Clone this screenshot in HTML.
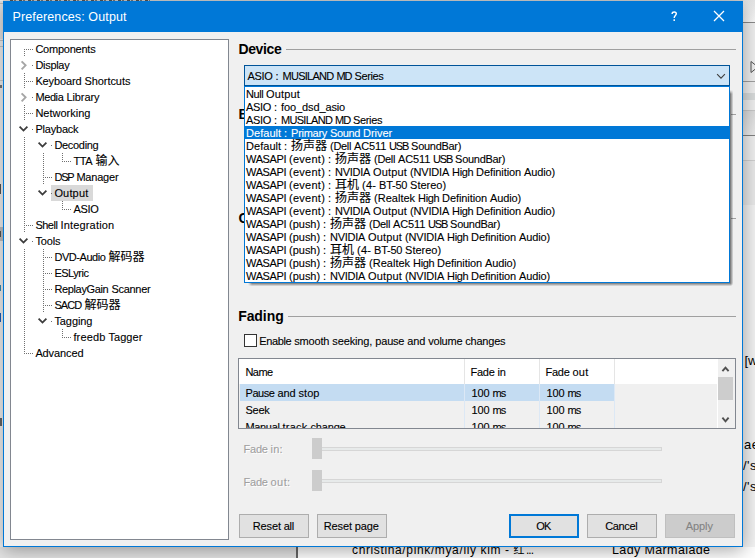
<!DOCTYPE html><html><head><meta charset="utf-8"><title>Preferences: Output</title><style>
html,body{margin:0;padding:0;}
body{width:755px;height:558px;overflow:hidden;position:relative;background:#f0f0f0;font-family:"Liberation Sans",sans-serif;font-size:11px;color:#000;}
*{box-sizing:border-box;}
.abs{position:absolute;}
.t{position:absolute;white-space:nowrap;line-height:14px;height:14px;font-size:11px;-webkit-text-stroke:0.1px;}
.t span{position:absolute;top:0;white-space:pre;}
.t svg{position:absolute;}
.t span.cjk{font-family:"Liberation Sans","Noto Sans CJK SC",sans-serif;font-size:12px;letter-spacing:0;}
.f{position:absolute;white-space:pre;}
#dlg{position:absolute;left:3px;top:1px;width:740px;height:546px;background:#f0f0f0;border:1px solid #0078d7;box-shadow:0 3px 18px rgba(0,0,0,0.36);}
#title{position:absolute;left:3px;top:1px;width:740px;height:31px;background:#0078d7;}
.hl{position:absolute;height:1px;background:#a0a0a0;}
.btn{position:absolute;height:24px;width:70px;border:1px solid #adadad;background:#e1e1e1;}
.dot-h{position:absolute;height:1px;background-image:linear-gradient(to right,#707070 50%,transparent 50%);background-size:2px 1px;}
.dot-v{position:absolute;width:1px;background-image:linear-gradient(to bottom,#707070 50%,transparent 50%);background-size:1px 2px;}
</style></head><body><div class="abs" style="left:0;top:0;width:755px;height:558px;background:#f0f0f0"></div>
<div class="abs" style="left:0;top:0;width:755px;height:1px;background:#d4d4d4"></div>
<div class="abs" style="left:10px;top:0;width:140px;height:1px;background-image:linear-gradient(to right,#555 30%,#ccc 30%,#ccc 45%,#777 45%,#777 65%,#d0d0d0 65%);background-size:9px 1px"></div>
<div class="abs" style="left:0;top:0;width:3px;height:558px;background:#f3f3f3"></div>
<div class="abs" style="left:0;top:1px;width:3px;height:38px;background:#e4e4e4"></div>
<div class="abs" style="left:0;top:3px;width:3px;height:1px;background:#bdbdbd"></div>
<div class="abs" style="left:0;top:40px;width:3px;height:1px;background:#c8c8c8"></div>
<div class="abs" style="left:0;top:46px;width:3px;height:1px;background:#c8c8c8"></div>
<div class="abs" style="left:0;top:80px;width:3px;height:1px;background:#d0d0d0"></div>
<div class="abs" style="left:0;top:85px;width:2px;height:3px;background:#777"></div>
<div class="abs" style="left:0;top:184px;width:1px;height:10px;background:#555"></div>
<div class="abs" style="left:0;top:227px;width:3px;height:14px;background:#c4c4c4"></div>
<div class="abs" style="left:0;top:231px;width:1px;height:6px;background:#555"></div>
<div class="abs" style="left:0;top:285px;width:1px;height:6px;background:#3a8fb7"></div>
<div class="abs" style="left:0;top:313px;width:1px;height:9px;background:#1e5fbf"></div>
<div class="abs" style="left:0;top:418px;width:2px;height:8px;background:#666"></div>
<div class="abs" style="left:743px;top:0;width:12px;height:558px;background:#f3f3f3"></div>
<div class="abs" style="left:743px;top:0;width:12px;height:22px;background:linear-gradient(to bottom,#e4e4e4,#fafafa)"></div>
<div class="abs" style="left:743px;top:22px;width:12px;height:1px;background:#8a8a8a"></div>
<div class="abs" style="left:743px;top:23px;width:12px;height:137px;background:#f0f0f0"></div>
<svg class="abs" style="left:750px;top:60px" width="5" height="14" viewBox="0 0 5 14"><path d="M1 1.5L8 7L1 12.5Z" stroke="#555" stroke-width="1" fill="none"/></svg>
<div class="abs" style="left:743px;top:81px;width:12px;height:1px;background:#a0a0a0"></div>
<div class="abs" style="left:743px;top:93px;width:12px;height:7px;background:#d9dcdc"></div>
<div class="abs" style="left:743px;top:110px;width:12px;height:1px;background:#c8c8c8"></div>
<div class="abs" style="left:743px;top:111px;width:12px;height:24px;background:linear-gradient(to bottom,#dcdcdc,#ececec)"></div>
<div class="abs" style="left:743px;top:135px;width:12px;height:1px;background:#808080"></div>
<div class="abs" style="left:743px;top:160px;width:12px;height:1px;background:#d0d0d0"></div>
<div class="abs" style="left:743px;top:161px;width:12px;height:44px;background:#e9e9e9"></div>
<div class="f" style="left:744.5px;top:352.00px;font-size:13px;line-height:17px;height:17px;letter-spacing:0.000px;color:#000;">[w</div>
<div class="f" style="left:744px;top:436.00px;font-size:13px;line-height:17px;height:17px;letter-spacing:0.000px;color:#000;letter-spacing:0.5px">ae</div>
<div class="f" style="left:743px;top:457.00px;font-size:13px;line-height:17px;height:17px;letter-spacing:0.000px;color:#000;letter-spacing:0.5px">/'s</div>
<div class="f" style="left:743px;top:478.00px;font-size:13px;line-height:17px;height:17px;letter-spacing:0.000px;color:#000;letter-spacing:0.5px">/'s</div>
<div class="abs" style="left:0;top:547px;width:755px;height:11px;background:#fff"></div>
<div class="abs" style="left:0;top:547px;width:296px;height:11px;background:#e4e4e4"></div>
<div class="abs" style="left:296px;top:547px;width:2px;height:11px;background:#666"></div>
<div class="f" style="left:352px;top:542.44px;font-size:12px;line-height:16px;height:16px;letter-spacing:0.632px;color:#000;">christina/pink/mya/liy kim</div>
<div class="f" style="left:505px;top:542.44px;font-size:12px;line-height:16px;height:16px;letter-spacing:0.000px;color:#000;">-</div>
<div class="f" style="left:513.5px;top:542.44px;font-size:11px;line-height:16px;height:16px;letter-spacing:0;color:#000;font-family:'Liberation Sans','Noto Sans CJK SC',sans-serif;">红</div>
<div class="f" style="left:526px;top:542.44px;font-size:12px;line-height:16px;height:16px;letter-spacing:-1.008px;color:#000;">...</div>
<div class="f" style="left:612px;top:542.27px;font-size:12.5px;line-height:16px;height:16px;letter-spacing:0.376px;color:#000;">Lady Marmalade</div>
<div id="dlg"></div>
<div id="title"></div>
<div class="f" style="left:12.5px;top:8.67px;font-size:12.5px;line-height:16px;height:16px;letter-spacing:0.118px;color:#fff;">Preferences: Output</div>
<svg class="abs" style="left:671px;top:11px" width="7" height="11" viewBox="0 0 7 11"><path d="M1.1 2.9C1.1 1.5 2 0.9 3.2 0.9C4.5 0.9 5.3 1.6 5.3 2.8C5.3 4.5 3.2 4.7 3.2 6.9M3.2 8.3V10" stroke="#fff" stroke-width="1.45" fill="none"/></svg>
<svg class="abs" style="left:713px;top:10px" width="12" height="12" viewBox="0 0 12 12"><path d="M1 1L11 11M11 1L1 11" stroke="#fff" stroke-width="1.25" fill="none"/></svg>
<div class="abs" style="left:10px;top:39px;width:219px;height:501px;background:#fff;border:1px solid #828790"></div>
<div class="t" style="left:35.4px;top:42.19px;color:#000;"><span style="left:0px;letter-spacing:-0.237px">Components</span></div>
<div class="dot-h" style="left:24px;top:49px;width:10px"></div>
<div class="t" style="left:35.4px;top:58.19px;color:#000;"><span style="left:0px;letter-spacing:-0.297px">Display</span></div>
<div class="dot-h" style="left:32px;top:65px;width:2px"></div>
<svg class="abs" style="left:20px;top:60px" width="8" height="10" viewBox="0 0 8 10"><path d="M1.6 1.3L5.6 5.3L1.6 9.3" stroke="#a6a6a6" stroke-width="1.9" fill="none"/></svg>
<div class="t" style="left:35.4px;top:74.19px;color:#000;"><span style="left:0px;letter-spacing:-0.137px">Keyboard</span><span style="left:49px;letter-spacing:-0.052px">Shortcuts</span></div>
<div class="dot-h" style="left:24px;top:81px;width:10px"></div>
<div class="t" style="left:35.4px;top:90.19px;color:#000;"><span style="left:0px;letter-spacing:-0.394px">Media</span><span style="left:31px;letter-spacing:-0.089px">Library</span></div>
<div class="dot-h" style="left:32px;top:97px;width:2px"></div>
<svg class="abs" style="left:20px;top:92px" width="8" height="10" viewBox="0 0 8 10"><path d="M1.6 1.3L5.6 5.3L1.6 9.3" stroke="#a6a6a6" stroke-width="1.9" fill="none"/></svg>
<div class="t" style="left:35.4px;top:106.19px;color:#000;"><span style="left:0px;letter-spacing:-0.003px">Networking</span></div>
<div class="dot-h" style="left:24px;top:113px;width:10px"></div>
<div class="t" style="left:35.4px;top:122.19px;color:#000;"><span style="left:0px;letter-spacing:-0.205px">Playback</span></div>
<div class="dot-h" style="left:32px;top:129px;width:2px"></div>
<svg class="abs" style="left:18px;top:125px" width="12" height="8" viewBox="0 0 12 8"><path d="M1.6 1.7L5.5 5.6L9.4 1.7" stroke="#3c3c3c" stroke-width="1.8" fill="none"/></svg>
<div class="t" style="left:54.4px;top:138.19px;color:#000;"><span style="left:0px;letter-spacing:-0.311px">Decoding</span></div>
<div class="dot-h" style="left:51px;top:145px;width:2px"></div>
<svg class="abs" style="left:37px;top:141px" width="12" height="8" viewBox="0 0 12 8"><path d="M1.6 1.7L5.5 5.6L9.4 1.7" stroke="#3c3c3c" stroke-width="1.8" fill="none"/></svg>
<div class="t" style="left:73.4px;top:154.19px;color:#000;"><span style="left:0px;letter-spacing:-0.323px">TTA</span><span class="cjk" style="left:22px">输入</span></div>
<div class="dot-h" style="left:62px;top:161px;width:10px"></div>
<div class="t" style="left:54.4px;top:170.19px;color:#000;"><span style="left:0px;letter-spacing:-1.208px">DSP</span><span style="left:22px;letter-spacing:-0.203px">Manager</span></div>
<div class="dot-h" style="left:43px;top:177px;width:10px"></div>
<div class="abs" style="left:51.0px;top:185px;width:42px;height:16px;background:#d9d9d9"></div>
<div class="t" style="left:54.4px;top:186.19px;color:#000;"><span style="left:0px;letter-spacing:0.161px">Output</span></div>
<div class="dot-h" style="left:51px;top:193px;width:2px"></div>
<svg class="abs" style="left:37px;top:189px" width="12" height="8" viewBox="0 0 12 8"><path d="M1.6 1.7L5.5 5.6L9.4 1.7" stroke="#3c3c3c" stroke-width="1.8" fill="none"/></svg>
<div class="t" style="left:73.4px;top:202.19px;color:#000;"><span style="left:0px;letter-spacing:-0.324px">ASIO</span></div>
<div class="dot-h" style="left:62px;top:209px;width:10px"></div>
<div class="t" style="left:35.4px;top:218.19px;color:#000;"><span style="left:0px;letter-spacing:-0.494px">Shell</span><span style="left:25px;letter-spacing:0.183px">Integration</span></div>
<div class="dot-h" style="left:24px;top:225px;width:10px"></div>
<div class="t" style="left:35.4px;top:234.19px;color:#000;"><span style="left:0px;letter-spacing:-0.138px">Tools</span></div>
<div class="dot-h" style="left:32px;top:241px;width:2px"></div>
<svg class="abs" style="left:18px;top:237px" width="12" height="8" viewBox="0 0 12 8"><path d="M1.6 1.7L5.5 5.6L9.4 1.7" stroke="#3c3c3c" stroke-width="1.8" fill="none"/></svg>
<div class="t" style="left:54.4px;top:250.19px;color:#000;"><span style="left:0px;letter-spacing:-0.448px">DVD-Audio</span><span class="cjk" style="left:54px">解码器</span></div>
<div class="dot-h" style="left:43px;top:257px;width:10px"></div>
<div class="t" style="left:54.4px;top:266.19px;color:#000;"><span style="left:0px;letter-spacing:-0.500px">ESLyric</span></div>
<div class="dot-h" style="left:43px;top:273px;width:10px"></div>
<div class="t" style="left:54.4px;top:282.19px;color:#000;"><span style="left:0px;letter-spacing:-0.348px">ReplayGain</span><span style="left:57px;letter-spacing:-0.283px">Scanner</span></div>
<div class="dot-h" style="left:43px;top:289px;width:10px"></div>
<div class="t" style="left:54.4px;top:298.19px;color:#000;"><span style="left:0px;letter-spacing:-0.891px">SACD</span><span class="cjk" style="left:30px">解码器</span></div>
<div class="dot-h" style="left:43px;top:305px;width:10px"></div>
<div class="t" style="left:54.4px;top:314.19px;color:#000;"><span style="left:0px;letter-spacing:-0.078px">Tagging</span></div>
<div class="dot-h" style="left:51px;top:321px;width:2px"></div>
<svg class="abs" style="left:37px;top:317px" width="12" height="8" viewBox="0 0 12 8"><path d="M1.6 1.7L5.5 5.6L9.4 1.7" stroke="#3c3c3c" stroke-width="1.8" fill="none"/></svg>
<div class="t" style="left:73.4px;top:330.19px;color:#000;"><span style="left:0px;letter-spacing:0.133px">freedb</span><span style="left:35px;letter-spacing:0.060px">Tagger</span></div>
<div class="dot-h" style="left:62px;top:337px;width:10px"></div>
<div class="t" style="left:35.4px;top:346.19px;color:#000;"><span style="left:0px;letter-spacing:-0.117px">Advanced</span></div>
<div class="dot-h" style="left:24px;top:353px;width:10px"></div>
<div class="dot-v" style="left:24px;top:49px;height:7px"></div>
<div class="dot-v" style="left:24px;top:73px;height:16px"></div>
<div class="dot-v" style="left:24px;top:105px;height:16px"></div>
<div class="dot-v" style="left:24px;top:137px;height:96px"></div>
<div class="dot-v" style="left:24px;top:249px;height:105px"></div>
<div class="dot-v" style="left:43px;top:137px;height:0px"></div>
<div class="dot-v" style="left:43px;top:153px;height:32px"></div>
<div class="dot-v" style="left:62px;top:153px;height:9px"></div>
<div class="dot-v" style="left:62px;top:201px;height:9px"></div>
<div class="dot-v" style="left:43px;top:249px;height:64px"></div>
<div class="dot-v" style="left:62px;top:329px;height:9px"></div>
<div class="f" style="left:238.5px;top:40.45px;font-size:14px;font-weight:bold;line-height:18px;height:18px;letter-spacing:-0.391px;color:#000;">Device</div>
<div class="hl" style="left:286px;top:49px;width:450px"></div>
<div class="f" style="left:238.5px;top:105.45px;font-size:14px;font-weight:bold;line-height:18px;height:18px;letter-spacing:0.000px;color:#000;">B</div>
<div class="f" style="left:238.5px;top:209.45px;font-size:14px;font-weight:bold;line-height:18px;height:18px;letter-spacing:0.000px;color:#000;">O</div>
<div class="hl" style="left:731px;top:114px;width:5px"></div>
<div class="hl" style="left:731px;top:218px;width:5px"></div>
<div class="abs" style="left:244px;top:65px;width:486px;height:21px;background:#cce4f7;border:1px solid #005499"></div>
<div class="t" style="left:247.5px;top:69.19px;color:#000;"><span style="left:0px;letter-spacing:-0.324px">ASIO</span><span style="left:28px;letter-spacing:0.938px">:</span><span style="left:35px;letter-spacing:-0.730px">MUSILAND</span><span style="left:89px;letter-spacing:-1.055px">MD</span><span style="left:107px;letter-spacing:-0.365px">Series</span></div>
<svg class="abs" style="left:716px;top:72.5px" width="10" height="7" viewBox="0 0 10 7"><path d="M1.1 1.2L5 5.1L8.9 1.2" stroke="#404040" stroke-width="1.15" fill="none"/></svg>
<div class="abs" style="left:730px;top:90px;width:3px;height:193px;background:linear-gradient(to bottom,rgba(240,240,240,1),rgba(240,240,240,0) 4px),linear-gradient(to right,rgba(0,0,0,0.55),rgba(0,0,0,0.08))"></div>
<div class="abs" style="left:248px;top:283px;width:482px;height:3px;background:linear-gradient(to right,rgba(240,240,240,1),rgba(240,240,240,0) 4px),linear-gradient(to bottom,rgba(0,0,0,0.5),rgba(0,0,0,0.06))"></div>
<div class="abs" style="left:730px;top:283px;width:3px;height:3px;background:radial-gradient(circle at 0 0,rgba(0,0,0,0.55),rgba(0,0,0,0.05) 3px,rgba(0,0,0,0) 3.5px)"></div>
<div class="abs" style="left:244px;top:86px;width:486px;height:197px;background:#fff;border:1px solid #0078d7"></div>
<div class="t" style="left:246.1px;top:87.19px;color:#000;"><span style="left:0px;letter-spacing:-0.488px">Null</span><span style="left:20px;letter-spacing:0.161px">Output</span></div>
<div class="t" style="left:246.1px;top:100.19px;color:#000;"><span style="left:0px;letter-spacing:-0.324px">ASIO</span><span style="left:28px;letter-spacing:0.938px">:</span><span style="left:35px;letter-spacing:-0.121px">foo_dsd_asio</span></div>
<div class="t" style="left:246.1px;top:113.19px;color:#000;"><span style="left:0px;letter-spacing:-0.324px">ASIO</span><span style="left:28px;letter-spacing:0.938px">:</span><span style="left:35px;letter-spacing:-0.730px">MUSILAND</span><span style="left:89px;letter-spacing:-1.055px">MD</span><span style="left:107px;letter-spacing:-0.365px">Series</span></div>
<div class="abs" style="left:245px;top:126px;width:484px;height:13px;background:#0078d7"></div>
<div class="t" style="left:246.1px;top:126.19px;color:#fff;"><span style="left:0px;letter-spacing:0.020px">Default</span><span style="left:38px;letter-spacing:0.938px">:</span><span style="left:45px;letter-spacing:-0.270px">Primary</span><span style="left:84px;letter-spacing:-0.362px">Sound</span><span style="left:117px;letter-spacing:-0.057px">Driver</span></div>
<div class="t" style="left:246.1px;top:139.19px;color:#000;"><span style="left:0px;letter-spacing:0.020px">Default</span><span style="left:38px;letter-spacing:0.938px">:</span><span class="cjk" style="left:45px">扬声器</span><span style="left:84px;letter-spacing:-0.325px">(Dell</span><span style="left:108px;letter-spacing:-0.166px">AC511</span><span style="left:143px;letter-spacing:-1.208px">USB</span><span style="left:165px;letter-spacing:-0.288px">SoundBar)</span></div>
<div class="t" style="left:246.1px;top:152.19px;color:#000;"><span style="left:0px;letter-spacing:-0.398px">WASAPI</span><span style="left:43px;letter-spacing:0.250px">(event)</span><span style="left:82px;letter-spacing:0.938px">:</span><span class="cjk" style="left:89px">扬声器</span><span style="left:128px;letter-spacing:-0.325px">(Dell</span><span style="left:152px;letter-spacing:-0.166px">AC511</span><span style="left:187px;letter-spacing:-1.208px">USB</span><span style="left:209px;letter-spacing:-0.288px">SoundBar)</span></div>
<div class="t" style="left:246.1px;top:165.19px;color:#000;"><span style="left:0px;letter-spacing:-0.398px">WASAPI</span><span style="left:43px;letter-spacing:0.250px">(event)</span><span style="left:82px;letter-spacing:0.938px">:</span><span style="left:89px;letter-spacing:-0.281px">NVIDIA</span><span style="left:127px;letter-spacing:0.161px">Output</span><span style="left:164px;letter-spacing:-0.192px">(NVIDIA</span><span style="left:206px;letter-spacing:-0.406px">High</span><span style="left:230px;letter-spacing:-0.086px">Definition</span><span style="left:278px;letter-spacing:-0.133px">Audio)</span></div>
<div class="t" style="left:246.1px;top:178.19px;color:#000;"><span style="left:0px;letter-spacing:-0.398px">WASAPI</span><span style="left:43px;letter-spacing:0.250px">(event)</span><span style="left:82px;letter-spacing:0.938px">:</span><span class="cjk" style="left:89px">耳机</span><span style="left:116px;letter-spacing:0.182px">(4-</span><span style="left:133px;letter-spacing:-0.272px">BT-50</span><span style="left:164px;letter-spacing:-0.011px">Stereo)</span></div>
<div class="t" style="left:246.1px;top:191.19px;color:#000;"><span style="left:0px;letter-spacing:-0.398px">WASAPI</span><span style="left:43px;letter-spacing:0.250px">(event)</span><span style="left:82px;letter-spacing:0.938px">:</span><span class="cjk" style="left:89px">扬声器</span><span style="left:128px;letter-spacing:0.004px">(Realtek</span><span style="left:172px;letter-spacing:-0.406px">High</span><span style="left:196px;letter-spacing:-0.086px">Definition</span><span style="left:244px;letter-spacing:-0.133px">Audio)</span></div>
<div class="t" style="left:246.1px;top:204.19px;color:#000;"><span style="left:0px;letter-spacing:-0.398px">WASAPI</span><span style="left:43px;letter-spacing:0.250px">(event)</span><span style="left:82px;letter-spacing:0.938px">:</span><span style="left:89px;letter-spacing:-0.281px">NVIDIA</span><span style="left:127px;letter-spacing:0.161px">Output</span><span style="left:164px;letter-spacing:-0.192px">(NVIDIA</span><span style="left:206px;letter-spacing:-0.406px">High</span><span style="left:230px;letter-spacing:-0.086px">Definition</span><span style="left:278px;letter-spacing:-0.133px">Audio)</span></div>
<div class="t" style="left:246.1px;top:217.19px;color:#000;"><span style="left:0px;letter-spacing:-0.398px">WASAPI</span><span style="left:43px;letter-spacing:-0.031px">(push)</span><span style="left:77px;letter-spacing:0.938px">:</span><span class="cjk" style="left:84px">扬声器</span><span style="left:123px;letter-spacing:-0.325px">(Dell</span><span style="left:147px;letter-spacing:-0.166px">AC511</span><span style="left:182px;letter-spacing:-1.208px">USB</span><span style="left:204px;letter-spacing:-0.288px">SoundBar)</span></div>
<div class="t" style="left:246.1px;top:230.19px;color:#000;"><span style="left:0px;letter-spacing:-0.398px">WASAPI</span><span style="left:43px;letter-spacing:-0.031px">(push)</span><span style="left:77px;letter-spacing:0.938px">:</span><span style="left:84px;letter-spacing:-0.281px">NVIDIA</span><span style="left:122px;letter-spacing:0.161px">Output</span><span style="left:159px;letter-spacing:-0.192px">(NVIDIA</span><span style="left:201px;letter-spacing:-0.406px">High</span><span style="left:225px;letter-spacing:-0.086px">Definition</span><span style="left:273px;letter-spacing:-0.133px">Audio)</span></div>
<div class="t" style="left:246.1px;top:243.19px;color:#000;"><span style="left:0px;letter-spacing:-0.398px">WASAPI</span><span style="left:43px;letter-spacing:-0.031px">(push)</span><span style="left:77px;letter-spacing:0.938px">:</span><span class="cjk" style="left:84px">耳机</span><span style="left:111px;letter-spacing:0.182px">(4-</span><span style="left:128px;letter-spacing:-0.272px">BT-50</span><span style="left:159px;letter-spacing:-0.011px">Stereo)</span></div>
<div class="t" style="left:246.1px;top:256.19px;color:#000;"><span style="left:0px;letter-spacing:-0.398px">WASAPI</span><span style="left:43px;letter-spacing:-0.031px">(push)</span><span style="left:77px;letter-spacing:0.938px">:</span><span class="cjk" style="left:84px">扬声器</span><span style="left:123px;letter-spacing:0.004px">(Realtek</span><span style="left:167px;letter-spacing:-0.406px">High</span><span style="left:191px;letter-spacing:-0.086px">Definition</span><span style="left:239px;letter-spacing:-0.133px">Audio)</span></div>
<div class="t" style="left:246.1px;top:269.19px;color:#000;"><span style="left:0px;letter-spacing:-0.398px">WASAPI</span><span style="left:43px;letter-spacing:-0.031px">(push)</span><span style="left:77px;letter-spacing:0.938px">:</span><span style="left:84px;letter-spacing:-0.281px">NVIDIA</span><span style="left:122px;letter-spacing:0.161px">Output</span><span style="left:159px;letter-spacing:-0.192px">(NVIDIA</span><span style="left:201px;letter-spacing:-0.406px">High</span><span style="left:225px;letter-spacing:-0.086px">Definition</span><span style="left:273px;letter-spacing:-0.133px">Audio)</span></div>
<div class="f" style="left:238.2px;top:307.45px;font-size:14px;font-weight:bold;line-height:18px;height:18px;letter-spacing:-0.078px;color:#000;">Fading</div>
<div class="hl" style="left:288px;top:316px;width:448px"></div>
<div class="abs" style="left:244px;top:334px;width:13px;height:13px;background:#fff;border:1px solid #333"></div>
<div class="t" style="left:259.3px;top:334.19px;color:#000;"><span style="left:0px;letter-spacing:-0.378px">Enable</span><span style="left:35px;letter-spacing:-0.180px">smooth</span><span style="left:73px;letter-spacing:-0.123px">seeking,</span><span style="left:116px;letter-spacing:-0.197px">pause</span><span style="left:148px;letter-spacing:-0.120px">and</span><span style="left:169px;letter-spacing:-0.245px">volume</span><span style="left:206px;letter-spacing:-0.228px">changes</span></div>
<div class="abs" style="left:238px;top:358px;width:498px;height:71px;background:#f0f0f0;border:1px solid #828790"></div>
<div class="abs" style="left:239px;top:359px;width:479px;height:25px;background:#fff"></div>
<div class="abs" style="left:717px;top:359px;width:1px;height:69px;background:#fff"></div>
<div class="abs" style="left:240px;top:384px;width:375px;height:17px;background:#c4dcf2"></div>
<div class="abs" style="left:464px;top:359px;width:1px;height:25px;background:#e5e5e5"></div>
<div class="abs" style="left:464px;top:384px;width:1px;height:44px;background:#dce8f5"></div>
<div class="abs" style="left:539px;top:359px;width:1px;height:25px;background:#e5e5e5"></div>
<div class="abs" style="left:539px;top:384px;width:1px;height:44px;background:#dce8f5"></div>
<div class="abs" style="left:614px;top:359px;width:1px;height:25px;background:#e5e5e5"></div>
<div class="abs" style="left:614px;top:384px;width:1px;height:44px;background:#dce8f5"></div>
<div class="t" style="left:245.5px;top:365.19px;color:#000;"><span style="left:0px;letter-spacing:-0.586px">Name</span></div>
<div class="t" style="left:470.5px;top:365.19px;color:#000;"><span style="left:0px;letter-spacing:-0.270px">Fade</span><span style="left:27px;letter-spacing:-0.281px">in</span></div>
<div class="t" style="left:545.5px;top:365.19px;color:#000;"><span style="left:0px;letter-spacing:-0.270px">Fade</span><span style="left:27px;letter-spacing:0.234px">out</span></div>
<div class="t" style="left:245.5px;top:386.19px;color:#000;"><span style="left:0px;letter-spacing:-0.441px">Pause</span><span style="left:32px;letter-spacing:-0.120px">and</span><span style="left:53px;letter-spacing:0.051px">stop</span></div>
<div class="t" style="left:471.5px;top:386.19px;color:#000;"><span style="left:0px;letter-spacing:-0.120px">100</span><span style="left:21px;letter-spacing:-0.836px">ms</span></div>
<div class="t" style="left:546.5px;top:386.19px;color:#000;"><span style="left:0px;letter-spacing:-0.120px">100</span><span style="left:21px;letter-spacing:-0.836px">ms</span></div>
<div class="t" style="left:245.5px;top:403.19px;color:#000;"><span style="left:0px;letter-spacing:-0.270px">Seek</span></div>
<div class="t" style="left:471.5px;top:403.19px;color:#000;"><span style="left:0px;letter-spacing:-0.120px">100</span><span style="left:21px;letter-spacing:-0.836px">ms</span></div>
<div class="t" style="left:546.5px;top:403.19px;color:#000;"><span style="left:0px;letter-spacing:-0.120px">100</span><span style="left:21px;letter-spacing:-0.836px">ms</span></div>
<div class="abs" style="left:239px;top:418px;width:478px;height:10px;overflow:hidden" id="clip">
<div class="t" style="left:6.5px;top:2.19px;color:#000;"><span style="left:0px;letter-spacing:-0.346px">Manual</span><span style="left:37px;letter-spacing:0.231px">track</span><span style="left:65px;letter-spacing:-0.182px">change</span></div>
<div class="t" style="left:232.5px;top:2.19px;color:#000;"><span style="left:0px;letter-spacing:-0.120px">100</span><span style="left:21px;letter-spacing:-0.836px">ms</span></div>
<div class="t" style="left:307.5px;top:2.19px;color:#000;"><span style="left:0px;letter-spacing:-0.120px">100</span><span style="left:21px;letter-spacing:-0.836px">ms</span></div>
</div>
<div class="abs" style="left:718px;top:359px;width:17px;height:69px;background:#f0f0f0"></div>
<div class="abs" style="left:718px;top:377px;width:15px;height:23px;background:#cdcdcd"></div>
<svg class="abs" style="left:720px;top:364px" width="11" height="9" viewBox="0 0 11 9"><path d="M2.4 7.2L5.5 3.6L8.6 7.2" stroke="#505050" stroke-width="1.9" fill="none"/></svg>
<svg class="abs" style="left:720px;top:414px" width="11" height="10" viewBox="0 0 11 10"><path d="M2.4 3.7L5.5 7.3L8.6 3.7" stroke="#505050" stroke-width="1.9" fill="none"/></svg>
<div class="t" style="left:243.6px;top:442.19px;color:#a0a0a0;text-shadow:1px 1px 0 #fff;"><span style="left:0px;letter-spacing:-0.270px">Fade</span><span style="left:27px;letter-spacing:0.125px">in:</span></div>
<div class="abs" style="left:317px;top:447px;width:345px;height:4px;background:#e7eaea;border:1px solid #d6d6d6"></div>
<div class="abs" style="left:312px;top:438px;width:10px;height:21px;background:#cccccc"></div>
<div class="t" style="left:243.6px;top:475.19px;color:#a0a0a0;text-shadow:1px 1px 0 #fff;"><span style="left:0px;letter-spacing:-0.270px">Fade</span><span style="left:27px;letter-spacing:0.410px">out:</span></div>
<div class="abs" style="left:317px;top:479px;width:345px;height:4px;background:#e7eaea;border:1px solid #d6d6d6"></div>
<div class="abs" style="left:312px;top:470px;width:10px;height:21px;background:#cccccc"></div>
<div class="btn" style="left:239px;top:514px;"></div>
<div class="t" style="left:252.8px;top:519.19px;color:#000;"><span style="left:0px;letter-spacing:-0.150px">Reset</span><span style="left:31px;letter-spacing:-0.339px">all</span></div>
<div class="btn" style="left:317px;top:514px;"></div>
<div class="t" style="left:323.8px;top:519.19px;color:#000;"><span style="left:0px;letter-spacing:-0.150px">Reset</span><span style="left:31px;letter-spacing:-0.121px">page</span></div>
<div class="btn" style="left:509px;top:514px;border:2px solid #0078d7"></div>
<div class="t" style="left:536.3px;top:519.19px;color:#000;"><span style="left:0px;letter-spacing:-0.953px">OK</span></div>
<div class="btn" style="left:587px;top:514px;"></div>
<div class="t" style="left:605.3px;top:519.19px;color:#000;"><span style="left:0px;letter-spacing:-0.375px">Cancel</span></div>
<div class="btn" style="left:665px;top:514px;background:#cccccc;border-color:#bfbfbf"></div>
<div class="t" style="left:685.8px;top:519.19px;color:#838383;"><span style="left:0px;letter-spacing:-0.106px">Apply</span></div></body></html>
